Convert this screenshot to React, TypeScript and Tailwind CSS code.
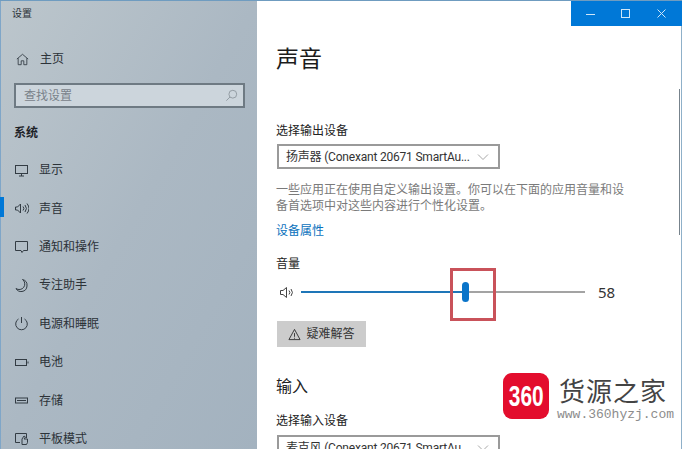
import type { ReactNode } from 'react';

const navItems: { label: string; icon: ReactNode; active?: boolean }[] = [
  {
    label: '显示',
    icon: (
      <>
        <rect x="1.5" y="2.5" width="12" height="8" />
        <path d="M5 13h5M7.5 10.5V13" />
      </>
    ),
  },
  {
    label: '声音',
    active: true,
    icon: (
      <>
        <path d="M1.5 6v3h2l3 3V3l-3 3z" />
        <path d="M9 5.5a3 3 0 0 1 0 4M11 4a5.500 5.500 0 0 1 0 7M13 2.500a8 8 0 0 1 0 10" />
      </>
    ),
  },
  {
    label: '通知和操作',
    icon: <path d="M1.500 2.500h12v9H9.500l-1.500 2-1-2H1.500z" />,
  },
  {
    label: '专注助手',
    icon: <path d="M8.500 1.500a5.500 5.500 0 0 1-6.500 9 6 6 0 0 0 6 3 6 6 0 0 0 5-5.500 6 6 0 0 0-4.500-6.500z" />,
  },
  {
    label: '电源和睡眠',
    icon: (
      <>
        <path d="M7.500 1v6" />
        <path d="M4.500 3a5.800 5.800 0 1 0 6 0" />
      </>
    ),
  },
  {
    label: '电池',
    icon: (
      <>
        <rect x="1.500" y="4.500" width="11" height="6" />
        <path d="M14 6.500v2" />
      </>
    ),
  },
  {
    label: '存储',
    icon: (
      <>
        <rect x="1.500" y="5" width="12" height="5" />
        <path d="M3 7.500h9" />
      </>
    ),
  },
  {
    label: '平板模式',
    icon: (
      <>
        <path d="M6 11.500H1.500v-9h11V7" />
        <path d="M8 13.500V8l2-3 1.500 1-1.500 2h3.500v3.500l-1 2z" />
      </>
    ),
  },
];

function NavIcon({ children }: { children: ReactNode }) {
  return (
    <svg viewBox="0 0 15 15" fill="none" stroke="currentColor" strokeWidth={1} className="h-[15px] w-[15px] text-[#333c44]">
      {children}
    </svg>
  );
}

function DeviceSelect({ label }: { label: string }) {
  return (
    <div className="ml-[1px] flex h-[25px] w-[223px] shrink-0 items-center justify-between border-2 border-[#9a9a9a] pl-[7px] pr-[9px] text-[12px] tracking-[-0.2px] text-[#333] [font-family:'Roboto','Noto_Sans_CJK_SC',sans-serif]">
      <span className="whitespace-nowrap">{label}</span>
      <svg viewBox="0 0 12 12" fill="none" stroke="#a8a8a8" strokeWidth={1} className="h-[12px] w-[12px]">
        <path d="M1 3.500l5 5 5-5" />
      </svg>
    </div>
  );
}

export default function App() {
  return (
    <div className="relative flex h-[449px] w-[682px] overflow-hidden border-t border-[#6f9cc0] text-[12px] [font-family:'Noto_Sans','Noto_Sans_CJK_SC',sans-serif]">
      {/* sidebar */}
      <aside className="flex h-full w-[257px] shrink-0 flex-col border-l border-[#7fa6c8] bg-gradient-to-br from-[#bcc6cc] via-[#abb8c3] to-[#a3b2bf] pl-[13px] pr-[12px] text-[#2c3238] *:shrink-0">
        <div className="-ml-[2px] flex h-[24px] items-center text-[10px] leading-none">设置</div>
        <div className="mt-[15px] flex h-[38px] items-center gap-[11px] pl-[2px]">
          <svg viewBox="0 0 15 15" fill="none" stroke="currentColor" strokeWidth={1} className="h-[13px] w-[13px] text-[#333c44]">
            <path d="M1 7l6.500-5.500L14 7M2.500 6v7.500H6V9h3v4.500h3.500V6" />
          </svg>
          <span>主页</span>
        </div>
        <div className="mt-[5px] flex h-[25px] w-[231px] items-center justify-between border-2 border-[#6e7a83] bg-[#ccd5dc] pl-[8px] pr-[5px] text-[#79828a]">
          <span>查找设置</span>
          <svg viewBox="0 0 15 15" fill="none" stroke="#8b949b" strokeWidth={1} className="h-[13px] w-[13px]">
            <circle cx="9" cy="6" r="4.500" />
            <path d="M5.800 9.200L1.500 13.500" />
          </svg>
        </div>
        <div className="mt-[16px] h-[18px] font-bold leading-[18px] text-[#1e2328]">系统</div>
        <nav className="mt-[9px] flex flex-col">
          {navItems.map((item) => (
            <div key={item.label} className="relative flex h-[38.4px] shrink-0 items-center gap-[10px]">
              {item.active && <span className="absolute left-[-14px] top-[8px] h-[20px] w-[4px] bg-[#0078d7]" />}
              <NavIcon>{item.icon}</NavIcon>
              <span>{item.label}</span>
            </div>
          ))}
        </nav>
      </aside>

      {/* main pane */}
      <main className="flex h-full min-w-0 flex-1 flex-col border-r border-[#8fb0c9] bg-white pl-[19px] text-[#222] *:shrink-0">
        <h1 className="mt-[39px] text-[23px] leading-[36px] text-[#1c1c1c]">声音</h1>
        <div className="mt-[46px] h-[18px] leading-[18px]">选择输出设备</div>
        <div className="mt-[4px]">
          <DeviceSelect label="扬声器 (Conexant 20671 SmartAu..." />
        </div>
        <p className="mt-[13px] w-[352px] leading-[16px] text-[#7a7a7a]">一些应用正在使用自定义输出设置。你可以在下面的应用音量和设备首选项中对这些内容进行个性化设置。</p>
        <a className="mt-[8px] h-[18px] leading-[18px] text-[#0b72bd]">设备属性</a>
        <div className="mt-[15px] h-[18px] leading-[18px]">音量</div>
        <div className="mt-[9px] flex h-[20px] items-center">
          <svg viewBox="0 0 15 15" fill="none" stroke="#444" strokeWidth={1} className="ml-[3px] h-[15px] w-[15px] shrink-0">
            <path d="M1.500 5.500v4h2.500l3.500 3v-10l-3.500 3z" />
            <path d="M10 5.500a3 3 0 0 1 0 4M12 4a5.500 5.500 0 0 1 0 7" />
          </svg>
          <div className="ml-[7px] flex w-[284px] shrink-0 items-center">
            <div className="h-[2px] w-[161px] bg-[#1e76b8]" />
            <div className="h-[20px] w-[7px] rounded-full bg-[#0a74c9]" />
            <div className="h-[2px] flex-1 bg-[#a3a3a3]" />
          </div>
          <span className="ml-[13px] text-[15px] text-[#333]">58</span>
        </div>
        <button type="button" className="ml-[1px] mt-[19px] flex h-[26px] w-[89px] items-center justify-center gap-[5px] bg-[#cccccc] text-[#333]">
          <svg viewBox="0 0 14 14" fill="none" stroke="#333" strokeWidth={1} className="h-[13px] w-[13px]">
            <path d="M7 1.500l6 11H1z" />
            <path d="M7 5.500v4M7 10.500v1" />
          </svg>
          <span>疑难解答</span>
        </button>
        <h2 className="mt-[27px] h-[24px] text-[16px] leading-[24px] text-[#222]">输入</h2>
        <div className="mt-[14px] h-[18px] leading-[18px]">选择输入设备</div>
        <div className="mt-[5px]">
          <DeviceSelect label="麦克风 (Conexant 20671 SmartAu..." />
        </div>
      </main>

      {/* window controls */}
      <div className="absolute right-0 top-0 flex h-[25px] w-[111px] items-center justify-around bg-[#0078d7] px-[2px] text-white">
        <svg viewBox="0 0 12 12" stroke="#cfe6f8" fill="none" className="h-[12px] w-[12px]"><path d="M1 6.500h9" /></svg>
        <svg viewBox="0 0 12 12" stroke="#cfe6f8" fill="none" className="h-[12px] w-[12px]"><rect x="1.500" y="1.500" width="8" height="8" /></svg>
        <svg viewBox="0 0 12 12" stroke="#cfe6f8" fill="none" className="h-[12px] w-[12px]"><path d="M1.500 1.500l8 8M9.500 1.500l-8 8" /></svg>
      </div>

      {/* scrollbar */}
      <div className="absolute right-[2px] top-[88px] h-[146px] w-[1px] bg-[#77838c]" />

      {/* red highlight box */}
      <div className="absolute left-[450px] top-[267px] h-[53px] w-[46px] border-[3px] border-[#c9525a]" />

      {/* watermark */}
      <div className="absolute left-[503px] top-[372px] flex items-start gap-[8px]">
        <div className="flex h-[46px] w-[46px] items-center justify-center overflow-hidden rounded-[9px] bg-[#e30d2d] text-white">
          <span className="scale-x-[0.72] text-[29px] font-bold leading-none [font-family:'Liberation_Sans',sans-serif]">360</span>
        </div>
        <div className="flex flex-col">
          <span className="ml-[2px] mt-[5px] h-[27px] text-[26px] leading-[27px] tracking-[1px] text-[#444]">货源之家</span>
          <span className="mt-[2px] text-[13px] leading-[15px] text-[#8c8c8c] [font-family:'Liberation_Mono',monospace]">www.360hyzj.com</span>
        </div>
      </div>
    </div>
  );
}
